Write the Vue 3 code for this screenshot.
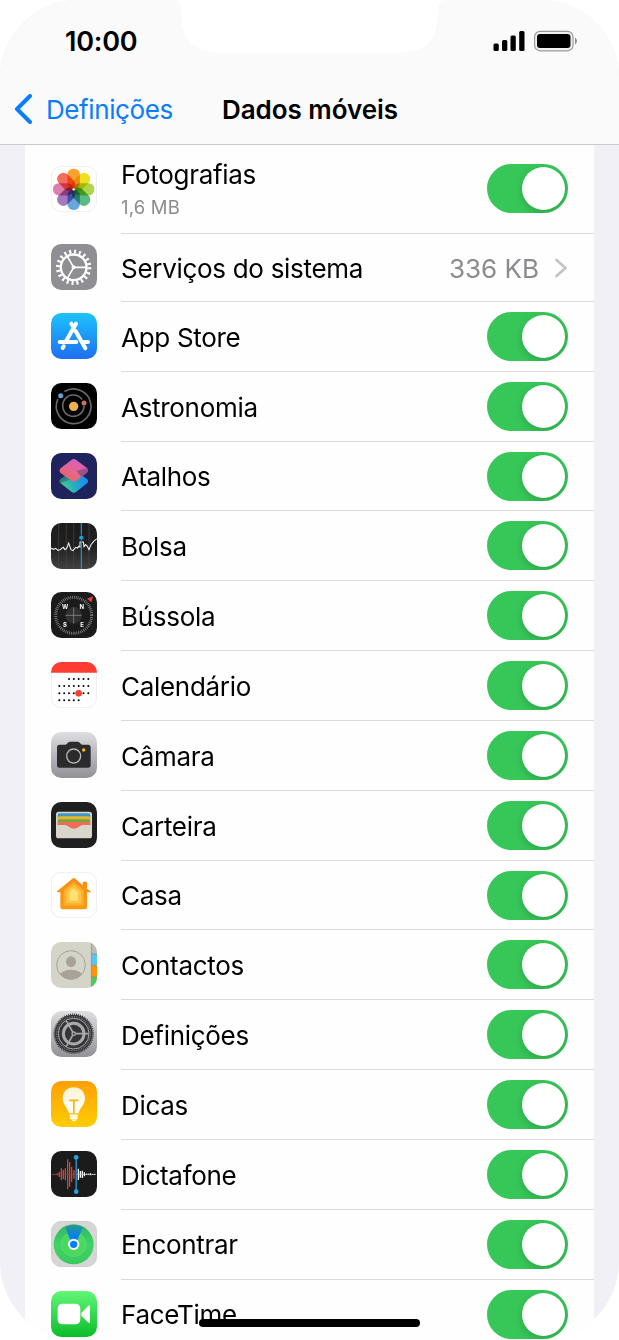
<script setup>
import { ref } from 'vue'

const apps = ref([
  { id: 'photos', name: 'Fotografias', usage: '1,6 MB', on: true },
  { id: 'system', name: 'Serviços do sistema', value: '336 KB' },
  { id: 'appstore', name: 'App Store', on: true },
  { id: 'astro', name: 'Astronomia', on: true },
  { id: 'shortcuts', name: 'Atalhos', on: true },
  { id: 'stocks', name: 'Bolsa', on: true },
  { id: 'compass', name: 'Bússola', on: true },
  { id: 'calendar', name: 'Calendário', on: true },
  { id: 'camera', name: 'Câmara', on: true },
  { id: 'wallet', name: 'Carteira', on: true },
  { id: 'home', name: 'Casa', on: true },
  { id: 'contacts', name: 'Contactos', on: true },
  { id: 'settings', name: 'Definições', on: true },
  { id: 'tips', name: 'Dicas', on: true },
  { id: 'voice', name: 'Dictafone', on: true },
  { id: 'findmy', name: 'Encontrar', on: true },
  { id: 'facetime', name: 'FaceTime', on: true },
])

const petals = ['#f99b1c', '#efdc0c', '#a9d13c', '#4cb579', '#5b9fdc', '#9a6fb8', '#d973a8', '#f4604f']

const calendarDots = [
  ...[2, 3, 4, 5, 6].map(c => [c, 0]),
  ...[0, 1, 2, 3, 4, 5, 6].map(c => [c, 1]),
  ...[0, 1, 2, 3, 5, 6].map(c => [c, 2]),
  ...[0, 1, 2, 3, 4].map(c => [c, 3]),
]

// [x, half height] of each bar in the waveform
const redWave = [[6, 1], [12, 1], [19, 3], [25, 8], [31, 18], [37, 14], [43, 18], [50, 45], [56, 37], [62, 22], [69, 13]]
const whiteWave = [[82, 17], [88, 10], [94, 11], [100, 6], [106, 2], [112, 2], [118, 3], [124, 1], [130, 1]]
</script>

<template>
  <div class="screen">
    <header class="top">
      <svg class="notch" width="277" height="53" viewBox="0 0 277 53">
        <path d="M3 0Q10.500 1 10.500 9V18Q12 52 46 52.500H231Q265 52 266.500 18V9Q266.500 1 274 0Z" fill="#fff" />
      </svg>
      <div class="status">
        <span class="time">10:00</span>
        <svg class="status-icons" width="86" height="22" viewBox="0 0 86 22">
          <rect x="0.500" y="13.500" width="5.300" height="7.500" rx="1.500" />
          <rect x="9" y="10" width="5.300" height="11" rx="1.500" />
          <rect x="17.500" y="5.500" width="5.300" height="15.500" rx="1.500" />
          <rect x="26.200" y="1" width="5.300" height="20" rx="1.500" />
          <rect x="41.600" y="1.400" width="38.400" height="19.400" rx="5.500" fill="#f2f2f2" stroke="#999" stroke-width="1.200" />
          <rect x="44" y="4" width="33.500" height="14" rx="3" />
          <path d="M82 7.500Q86 11 82 14.500Z" fill="#888" />
        </svg>
      </div>
      <nav class="nav">
        <a class="back">
          <svg width="18" height="30" viewBox="0 0 18 30"><path d="M16 2L3 15L16 28" fill="none" stroke="#0a7cff" stroke-width="4" stroke-linecap="round" stroke-linejoin="round" /></svg>
          <span>Definições</span>
        </a>
        <h1 class="title">Dados móveis</h1>
      </nav>
    </header>

    <ul class="list">
      <li v-for="app in apps" :key="app.id" class="row" :class="'row--' + app.id">
        <svg class="icon" viewBox="0 0 138 138">
          <g v-if="app.id === 'photos'">
            <rect x="1" y="1" width="136" height="136" rx="30" fill="#fff" stroke="#e6e6e6" stroke-width="2" />
            <g class="petals">
              <rect v-for="(color, i) in petals" :key="color" x="49.500" y="8" width="37" height="61" rx="17" :fill="color" :transform="`rotate(${i * 45} 68 70)`" />
            </g>
            <circle cx="68" cy="70" r="3.500" fill="#fff" />
          </g>

          <g v-else-if="app.id === 'system'">
            <rect width="138" height="138" rx="31" fill="#8e8e93" />
            <g fill="none" stroke="#fff">
              <circle cx="68" cy="70" r="47" stroke-width="12" pathLength="40" stroke-dasharray="0.850 1.150" />
              <circle cx="68" cy="70" r="38.500" stroke-width="7" />
              <path d="M68 70H105M68 70L49 37M68 70L49 103" stroke-width="5" />
            </g>
            <circle cx="68" cy="70" r="6" fill="#fff" />
          </g>

          <g v-else-if="app.id === 'appstore'">
            <defs><linearGradient id="store" x2="0" y2="1"><stop stop-color="#1dc3fb" /><stop offset="1" stop-color="#1d6ff2" /></linearGradient></defs>
            <rect width="138" height="138" rx="31" fill="url(#store)" />
            <g fill="none" stroke="#fff" stroke-width="12" stroke-linecap="round">
              <path d="M75 32L44 86M38 100L35 105M26 87H76M98 87H111M61 32L67 42M74 54L103 106" />
            </g>
          </g>

          <g v-else-if="app.id === 'astro'">
            <rect width="138" height="138" rx="31" />
            <g fill="none" stroke="#68686a" stroke-width="5">
              <path d="M20 50A52 52 0 1 0 42 25" stroke-linecap="round" />
              <path d="M99 70A32 32 0 1 1 92 48" stroke-linecap="round" />
            </g>
            <circle cx="68" cy="70" r="14" fill="#f0b04d" />
            <circle cx="29" cy="38" r="7.500" fill="#5da7dc" />
            <circle cx="99" cy="60" r="7.500" fill="#c9705b" />
          </g>

          <g v-else-if="app.id === 'shortcuts'">
            <defs>
              <linearGradient id="scTop" x1="0.700" y1="0" x2="0.300" y2="1"><stop stop-color="#dd60d1" /><stop offset="0.500" stop-color="#ef6892" /><stop offset="1" stop-color="#ef655b" /></linearGradient>
              <linearGradient id="scBottom" x1="1" y1="0.300" x2="0" y2="0.700"><stop stop-color="#1688fa" /><stop offset="0.500" stop-color="#22a9cc" /><stop offset="1" stop-color="#4ad37b" /></linearGradient>
              <linearGradient id="scFade" x1="0" y1="0" x2="1" y2="0.500"><stop stop-color="#1e2463" stop-opacity="0.750" /><stop offset="1" stop-color="#1e2463" stop-opacity="0" /></linearGradient>
            </defs>
            <rect width="138" height="138" rx="31" fill="#1f225c" />
            <path d="M61 55Q68 51 76 55L108 78Q115 84 108 91L76 116Q68 122 61 116L29 91Q22 84 29 78Z" fill="url(#scBottom)" />
            <path d="M61 55Q68 51 76 55L90 66L61 79Q43 85 29 91Q22 84 29 78Z" fill="url(#scFade)" />
            <path d="M61 21Q68 15 76 21L108 45Q115 52 108 59L76 83Q68 88 61 83L29 60Q22 53 29 46Z" fill="url(#scTop)" opacity="0.950" />
            <path d="M76 54L108 45Q115 52 108 59L91 72Z" fill="#6a4684" opacity="0.600" />
          </g>

          <g v-else-if="app.id === 'stocks'">
            <defs>
              <linearGradient id="stockBg" x2="0" y2="1"><stop stop-color="#1b1b1c" /><stop offset="0.500" stop-color="#202021" /><stop offset="1" stop-color="#414142" /></linearGradient>
            </defs>
            <rect width="138" height="138" rx="31" fill="url(#stockBg)" />
            <path d="M23 2V136M46 0V138M68 0V138M114 2V136" stroke="#484849" stroke-width="2" />
            <path d="M0 76L8 79L14 76L21 82L27 80L37 73L42 80L47 76L53 60L60 80L66 83L74 73L80 75L83 70L87 72V57H97L99 71L104 65L109 70L114 80L120 65L128 55L138 47" fill="none" stroke="#eee" stroke-width="3.300" />
            <path d="M91 0V138" stroke="#159fdc" stroke-width="3.500" />
            <circle cx="91" cy="44" r="7.500" fill="#159fdc" stroke="#1c1c1d" stroke-width="2" />
          </g>

          <g v-else-if="app.id === 'compass'">
            <rect width="138" height="138" rx="31" fill="#1b1b1c" />
            <circle cx="68" cy="70" r="54" fill="none" stroke="#8f8f8f" stroke-width="9" pathLength="120" stroke-dasharray="0.800 1.200" />
            <circle cx="68" cy="70" r="25" fill="#303031" />
            <path d="M44 70H92M68 46V94" stroke="#858585" stroke-width="2.500" />
            <path d="M108 20L126 13L121 31Z" fill="#f0443a" />
            <g class="compass-letters">
              <text x="42" y="50">W</text><text x="92" y="50">N</text><text x="42" y="104">S</text><text x="93" y="104">E</text>
            </g>
          </g>

          <g v-else-if="app.id === 'calendar'">
            <rect x="1" y="1" width="136" height="136" rx="30" fill="#fff" stroke="#e6e6e6" stroke-width="2" />
            <path d="M0 32V31A31 31 0 0 1 31 0H107A31 31 0 0 1 138 31V32Z" fill="#fd3d32" />
            <circle v-for="[col, line] in calendarDots" :key="`${col}-${line}`" :cx="25 + col * 14.500" :cy="51 + line * 21.300" r="3" />
            <circle cx="83" cy="94" r="10" fill="#fd3d32" />
          </g>

          <g v-else-if="app.id === 'camera'">
            <defs><linearGradient id="silver" x2="0" y2="1"><stop stop-color="#dedde0" /><stop offset="1" stop-color="#929196" /></linearGradient></defs>
            <rect width="138" height="138" rx="31" fill="url(#silver)" />
            <path d="M26 38H43Q47 38 50 33Q53 29 58 29H79Q84 29 87 33Q90 38 94 38H111Q119 38 119 46V99Q119 107 111 107H26Q18 107 18 99V46Q18 38 26 38Z" fill="#2b2b2c" />
            <circle cx="68" cy="72" r="21" fill="none" stroke="#b7b7b9" stroke-width="4" />
            <circle cx="98" cy="54" r="5" fill="#fbbd0c" />
          </g>

          <g v-else-if="app.id === 'wallet'">
            <rect width="138" height="138" rx="31" fill="#1f1f20" />
            <rect x="15" y="29" width="108" height="80" rx="8" fill="#d9d7cb" />
            <path d="M20 40Q20 34 26 34H112Q118 34 118 40V50H20Z" fill="#4196c8" />
            <path d="M20 48Q20 43 25 43H113Q118 43 118 48V60H20Z" fill="#e6b62e" />
            <path d="M20 57Q20 52 25 52H113Q118 52 118 57V68H20Z" fill="#72a83e" />
            <path d="M20 65Q20 60 25 60H113Q118 60 118 65V69H20Z" fill="#ef6d5a" />
            <path d="M20 67H118V69H96Q89 69 84 74Q69 86 53 74Q48 69 41 69H20Z" fill="#ef6d5a" />
          </g>

          <g v-else-if="app.id === 'home'">
            <defs>
              <linearGradient id="house" x2="0" y2="1"><stop stop-color="#f78d18" /><stop offset="1" stop-color="#fb9a10" /></linearGradient>
            </defs>
            <rect x="1" y="1" width="136" height="136" rx="30" fill="#fff" stroke="#e6e6e6" stroke-width="2" />
            <path d="M64 20Q68 16 73 20L95 40V32Q95 29 98 29H105Q108 29 108 32V50L119 58Q121 61 118 61H108V106Q108 112 102 112H34Q28 112 28 106V61H19Q16 60 19 57Z" fill="url(#house)" />
            <path d="M68 29L98 55V97Q98 101 94 101H42Q38 101 38 97V55Z" fill="#fcae28" />
            <path d="M68 39L90 58V91Q90 94 87 94H49Q46 94 46 91V58Z" fill="#fdc446" />
            <path d="M68 49L81 61V83Q81 86 78 86H58Q55 86 55 83V61Z" fill="#fee073" />
          </g>

          <g v-else-if="app.id === 'contacts'">
            <defs>
              <clipPath id="contactShape"><rect width="138" height="138" rx="31" /></clipPath>
              <clipPath id="avatar"><circle cx="60" cy="69" r="43" /></clipPath>
            </defs>
            <g clip-path="url(#contactShape)">
              <rect width="138" height="138" fill="#d4d4c9" />
              <path d="M121 0H138V36H121Z" fill="#bcbcb3" />
              <path d="M121 36H138V70H121Z" fill="#5ac3f7" />
              <path d="M121 70H138V105H121Z" fill="#fd9408" />
              <path d="M121 105H138V138H121Z" fill="#4ccb63" />
              <path d="M121 0V138M121 36H138M121 70H138M121 105H138" stroke="#76766e" stroke-width="2" opacity="0.700" />
            </g>
            <circle cx="60" cy="69" r="43" fill="none" stroke="#a8a299" stroke-width="3" />
            <g fill="#a8a299" clip-path="url(#avatar)"><ellipse cx="60" cy="59" rx="15" ry="16" /><ellipse cx="60" cy="105" rx="35" ry="22" /></g>
          </g>

          <g v-else-if="app.id === 'settings'">
            <rect width="138" height="138" rx="31" fill="url(#silver)" />
            <circle cx="68" cy="68" r="57" fill="#353537" />
            <g fill="none" stroke="#353537">
              <circle cx="68" cy="68" r="58.500" stroke-width="4" pathLength="120" stroke-dasharray="1 1" />
              <circle cx="68" cy="68" r="51" stroke="#77777a" stroke-width="4" pathLength="120" stroke-dasharray="1 1" />
              <circle cx="68" cy="68" r="46" stroke="#a9a8ac" stroke-width="3" />
              <circle cx="68" cy="68" r="31" stroke="#a9a8ac" stroke-width="9" />
              <path d="M68 68H113M68 68L45.500 29M68 68L45.500 107" stroke="#a9a8ac" stroke-width="5" />
            </g>
            <circle cx="68" cy="68" r="7" fill="#a9a8ac" /><circle cx="68" cy="68" r="3" fill="#353537" />
          </g>

          <g v-else-if="app.id === 'tips'">
            <defs>
              <linearGradient id="tips" x2="0" y2="1"><stop stop-color="#fe9f04" /><stop offset="1" stop-color="#fecd02" /></linearGradient>
              <linearGradient id="bulb" x2="0" y2="1"><stop stop-color="#fff2d2" /><stop offset="0.500" stop-color="#fffaea" /><stop offset="1" stop-color="#fff" /></linearGradient>
            </defs>
            <rect width="138" height="138" rx="31" fill="url(#tips)" />
            <path d="M68 19C91 19 103 36 102 54C100 75 85 80 83 97H54C52 80 37 75 35 54C34 36 46 19 68 19Z" fill="url(#bulb)" />
            <path d="M55 58H82M68.500 58V97" stroke="#f9b410" stroke-width="5" />
            <path d="M57 101H80V107H57ZM58 109H79V114H58ZM61 116H76L72 120H65Z" fill="#fff" stroke="#fff" stroke-width="1" />
          </g>

          <g v-else-if="app.id === 'voice'">
            <rect width="138" height="138" rx="31" fill="#1b1b1c" />
            <g stroke-width="3.800">
              <path v-for="[x, h] in redWave" :key="x" :d="`M${x} ${70 - h}V${70 + h}`" stroke="#d24a42" />
              <path v-for="[x, h] in whiteWave" :key="x" :d="`M${x} ${70 - h}V${70 + h}`" stroke="#fff" />
              <path d="M3 70H72" stroke="#a33e39" stroke-width="2" /><path d="M79 70H135" stroke="#ccc" stroke-width="2" />
              <path d="M75.500 19V122" stroke="#29a3e4" />
            </g>
            <circle cx="75.500" cy="19" r="7" fill="#29a3e4" /><circle cx="75.500" cy="122" r="7" fill="#29a3e4" />
          </g>

          <g v-else-if="app.id === 'findmy'">
            <defs>
              <linearGradient id="radar" x2="0" y2="1"><stop stop-color="#2eb567" /><stop offset="0.500" stop-color="#40d264" /><stop offset="1" stop-color="#38ca5c" /></linearGradient>
              <linearGradient id="beam" x2="0" y2="1"><stop stop-color="#239794" /><stop offset="0.550" stop-color="#0b80ee" /><stop offset="1" stop-color="#087dff" /></linearGradient>
            </defs>
            <rect x="1" y="1" width="136" height="136" rx="30" fill="#d6d6d5" stroke="#c6c6c5" stroke-width="2" />
            <circle cx="68" cy="70" r="60" fill="url(#radar)" />
            <circle cx="68" cy="70" r="37" fill="#4ad861" stroke="#5ede6f" stroke-width="2" />
            <path d="M43 19Q68 7 95 19L74 70H63Z" fill="url(#beam)" />
            <circle cx="68" cy="70" r="17" fill="#fff" /><circle cx="68" cy="70" r="11" fill="#087cff" />
          </g>

          <g v-else>
            <defs><linearGradient id="face" x2="0" y2="1"><stop stop-color="#61f777" /><stop offset="1" stop-color="#0bbd29" /></linearGradient></defs>
            <rect width="138" height="138" rx="31" fill="url(#face)" />
            <rect x="20" y="38" width="68" height="62" rx="14" fill="#fff" />
            <path d="M91 66L111 45Q117 40 117 46V93Q117 98 111 94L91 74Z" fill="#fff" />
          </g>
        </svg>

        <div class="body">
          <div class="label">
            <span class="name">{{ app.name }}</span>
            <span v-if="app.usage" class="usage">{{ app.usage }}</span>
          </div>
          <div v-if="app.value" class="detail">
            <span>{{ app.value }}</span>
            <svg width="14" height="22" viewBox="0 0 14 22"><path d="M2.500 3L11.500 11L2.500 19" fill="none" stroke="#c4c4c6" stroke-width="2.800" stroke-linecap="round" stroke-linejoin="round" /></svg>
          </div>
          <button v-else class="switch" :class="{ on: app.on }" :aria-label="app.name" @click="app.on = !app.on"><i class="knob"></i></button>
        </div>
      </li>
    </ul>
    <div class="home-bar"></div>
  </div>
</template>

<style>
body { margin: 0; background: #fff; }
</style>

<style scoped>
* { box-sizing: border-box; margin: 0; padding: 0; }

.screen {
  position: relative;
  width: 619px;
  height: 1340px;
  overflow: hidden;
  border-radius: 78px;
  background: #f1f0f6;
  font-family: Inter, 'Liberation Sans', sans-serif;
  font-size: 26px;
  color: #000;
}

/* HEADER */
.top {
  position: relative;
  height: 145px;
  background: #fafafa;
  border-bottom: 1px solid #c9c9cd;
}
.notch { position: absolute; left: 171px; top: 0; }
.status {
  display: flex;
  justify-content: space-between;
  align-items: center;
  height: 82px;
  padding: 0 40px 0 65px;
}
.time { font-weight: 600; font-size: 27px; letter-spacing: -0.2px; }
.status-icons { display: block; }
.nav {
  display: flex;
  align-items: center;
  height: 54px;
}
.back {
  display: flex;
  align-items: center;
  gap: 14px;
  width: 208px;
  padding-left: 14px;
  color: #0a7cff;
  letter-spacing: -0.4px;
}
.title { margin-left: 14px; font-size: 26px; font-weight: 600; letter-spacing: -0.05px; white-space: nowrap; }

/* LIST */
.list {
  list-style: none;
  margin: 0 25px;
  background: #fefefe;
}
.row {
  display: flex;
  align-items: center;
  height: 69.83px;
  padding-left: 26px;
}
.row--photos { height: 89px; }
.row--system { height: 68px; }
.icon { display: block; width: 46px; height: 46px; flex-shrink: 0; margin-bottom: 1.6px; }
.body {
  display: flex;
  align-items: center;
  justify-content: space-between;
  flex: 1;
  height: 100%;
  margin-left: 24px;
  padding-right: 26px;
  border-bottom: 1px solid #dcdcde;
}
.label { display: flex; flex-direction: column; padding-top: 2.6px; }
.name { line-height: 32px; letter-spacing: -0.3px; white-space: nowrap; }
.usage { margin-top: 4px; font-size: 18.5px; line-height: 24px; letter-spacing: 0.2px; color: #8b8b8f; }
.detail { display: flex; align-items: center; gap: 15px; padding-top: 1.6px; color: #8b8b8f; }
.row--photos .label { padding-top: 0; }
.row--photos .switch { margin-bottom: 2px; }
.petals rect { mix-blend-mode: multiply; opacity: 0.92; }
.compass-letters {
  fill: #fff;
  font-size: 18px;
  font-weight: 700;
  text-anchor: middle;
}

/* SWITCH */
.switch {
  display: flex;
  align-items: center;
  width: 81px;
  height: 49px;
  padding: 3px;
  border: none;
  border-radius: 25px;
  background: #e9e9eb;
  overflow: hidden;
  cursor: pointer;
}
.switch.on { justify-content: flex-end; background: #37c759; }
.knob {
  width: 43px;
  height: 43px;
  border-radius: 50%;
  background: #fff;
  box-shadow: 0 3px 9px rgba(0,0,0,0.18);
}

.home-bar {
  position: absolute;
  left: 199px;
  top: 1319px;
  width: 221px;
  height: 8px;
  border-radius: 4px;
  background: #000;
}
</style>
